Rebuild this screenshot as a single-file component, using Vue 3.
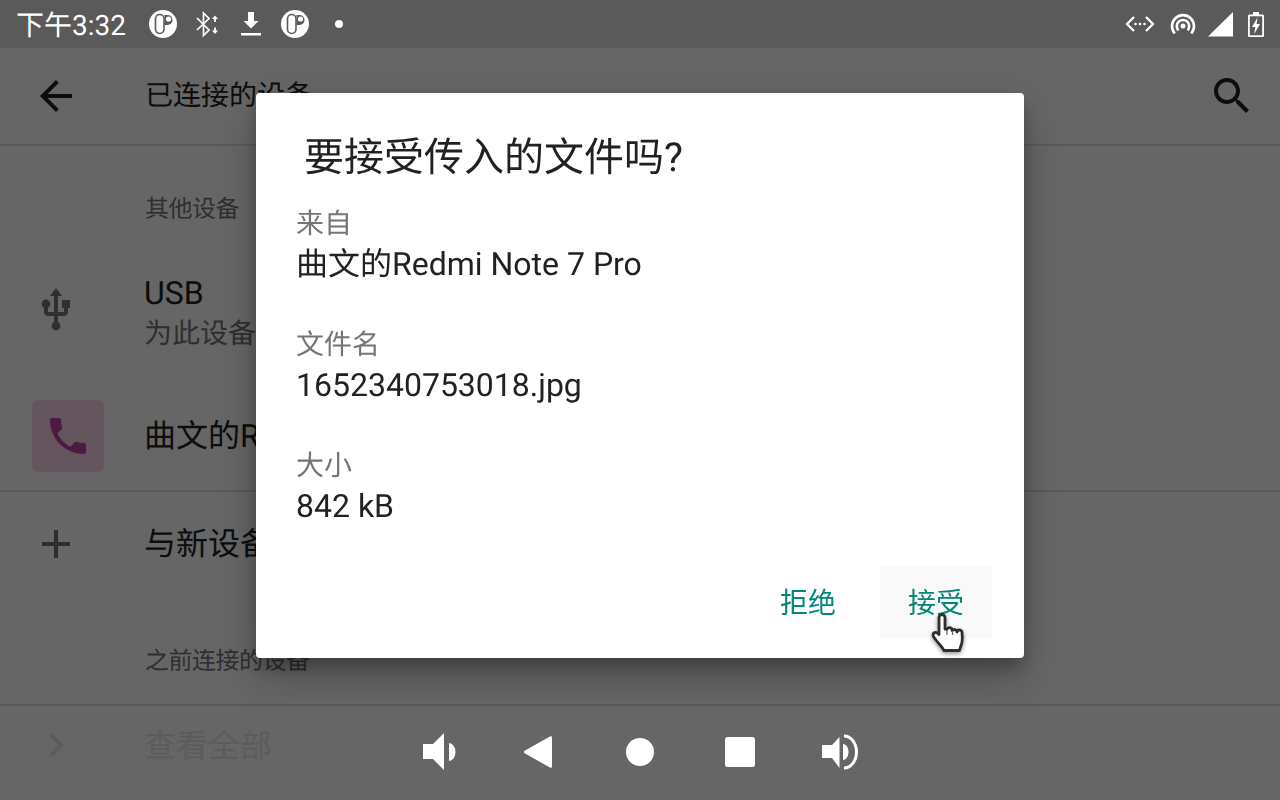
<script setup>
const dialogFields = [
  { label: '来自', value: '曲文的Redmi Note 7 Pro' },
  { label: '文件名', value: '1652340753018.jpg' },
  { label: '大小', value: '842 kB' }
]
</script>

<template>
  <div class="screen">
    <header class="status">
      <div class="status-left">
        <span class="clock">下午3:32</span>
        <svg class="app-dot" width="28" height="28" viewBox="0 0 28 28">
          <circle cx="14" cy="14" r="14" fill="#fff" />
          <rect x="6.500" y="4.500" width="8.500" height="19" rx="4.250" fill="#fff" stroke="#5a5a5a" stroke-width="1.600" />
          <path d="M15.500 5h3a5 5 0 0 1 0 10h-3z" fill="#5a5a5a" />
          <circle cx="19.500" cy="9" r="2.600" fill="#fff" />
        </svg>
        <svg class="bt" width="26" height="28" viewBox="0 0 26 28">
          <path d="M3 8l12 12-5.500 5.500V3L15 8.500 3 20" fill="none" stroke="#fff" stroke-width="1.700" />
          <path d="M21 5.500l-3 3.500h2.100v3h1.800V9H24zM21 24l-3-3.500h2.100v-3h1.800v3H24z" fill="#fff" />
        </svg>
        <svg class="dl" width="22" height="28" viewBox="0 0 22 28">
          <path d="M8 2h6v9h4.500L11 18.500 3.500 11H8z" fill="#fff" />
          <rect x="1" y="23" width="20" height="2.500" fill="#fff" />
        </svg>
        <svg class="app-dot2" width="28" height="28" viewBox="0 0 28 28">
          <circle cx="14" cy="14" r="14" fill="#fff" />
          <rect x="6.500" y="4.500" width="8.500" height="19" rx="4.250" fill="#fff" stroke="#5a5a5a" stroke-width="1.600" />
          <path d="M15.500 5h3a5 5 0 0 1 0 10h-3z" fill="#5a5a5a" />
          <circle cx="19.500" cy="9" r="2.600" fill="#fff" />
        </svg>
        <span class="more-dot"></span>
      </div>
      <div class="status-right">
        <svg width="30" height="18" viewBox="0 0 30 18">
          <path d="M9 2L2 9l7 7M21 2l7 7-7 7" fill="none" stroke="#fff" stroke-width="2.200" />
          <circle cx="10.500" cy="9" r="1.300" fill="#fff" />
          <circle cx="15" cy="9" r="1.300" fill="#fff" />
          <circle cx="19.500" cy="9" r="1.300" fill="#fff" />
        </svg>
        <svg class="wifi" width="26" height="24" viewBox="0 0 26 24">
          <path d="M4.800 21.500A11 11 0 1 1 21.200 21.500" fill="none" stroke="#fff" stroke-width="2.600" />
          <path d="M8.400 18.300A6.200 6.200 0 1 1 17.600 18.300" fill="none" stroke="#fff" stroke-width="2.600" />
          <circle cx="13" cy="14" r="2.500" fill="#fff" />
        </svg>
        <svg width="25" height="25" viewBox="0 0 25 25"><path d="M25 0v24.500H0z" fill="#fff" /></svg>
        <svg width="16" height="25" viewBox="0 0 16 25">
          <path d="M5 0h6v2.500h3.500a1.500 1.500 0 0 1 1.500 1.500v19.500a1.500 1.500 0 0 1-1.500 1.500h-13A1.500 1.500 0 0 1 0 23.500V4a1.500 1.500 0 0 1 1.500-1.500H5z" fill="#fff" />
          <path d="M1.800 4.300h12.400v19H1.800z" fill="#5a5a5a" />
          <path d="M9.500 5.500L4 15h3.200l-1 7L12 12H8.600z" fill="#fff" />
        </svg>
      </div>
    </header>

    <div class="toolbar">
      <svg class="icon back" width="48" height="48" viewBox="0 0 24 24"><path d="M20 11H7.830l5.590-5.590L12 4l-8 8 8 8 1.410-1.410L7.830 13H20v-2z" /></svg>
      <span class="toolbar-title">已连接的设备</span>
      <svg class="icon search" width="48" height="48" viewBox="0 0 24 24"><path d="M15.500 14h-.79l-.28-.27C15.410 12.590 16 11.110 16 9.500 16 5.910 13.090 3 9.500 3S3 5.910 3 9.500 5.910 16 9.500 16c1.610 0 3.090-.59 4.230-1.570l.27.28v.79l5 4.990L20.490 19l-4.990-5zm-6 0C7.010 14 5 11.990 5 9.500S7.010 5 9.500 5 14 7.010 14 9.500 11.990 14 9.500 14z" /></svg>
    </div>

    <div class="section-head first">其他设备</div>

    <div class="row usb">
      <svg class="row-icon usb-icon" width="48" height="48" viewBox="0 0 24 24"><path d="M15 7v4h1v2h-3V5h2l-3-4-3 4h2v8H8v-2.070c.7-.37 1.200-1.080 1.200-1.930 0-1.210-.99-2.200-2.200-2.200-1.210 0-2.200.99-2.200 2.200 0 .85.5 1.560 1.200 1.930V13c0 1.110.89 2 2 2h3v3.050c-.71.37-1.200 1.100-1.200 1.950 0 1.220.99 2.200 2.200 2.200 1.210 0 2.200-.98 2.200-2.200 0-.85-.49-1.580-1.200-1.950V15h3c1.110 0 2-.89 2-2v-2h1V7h-4z" /></svg>
      <div class="row-text">
        <div class="row-title">USB</div>
        <div class="row-sub">为此设备充电</div>
      </div>
    </div>

    <div class="row phone">
      <div class="tile">
        <svg width="48" height="48" viewBox="0 0 24 24"><path d="M6.620 10.790c1.440 2.830 3.760 5.140 6.590 6.590l2.200-2.200c.27-.27.670-.36 1.020-.24 1.120.37 2.330.57 3.570.57.55 0 1 .45 1 1V20c0 .55-.45 1-1 1-9.390 0-17-7.610-17-17 0-.55.45-1 1-1h3.500c.55 0 1 .45 1 1 0 1.250.2 2.450.57 3.570.11.35.03.74-.25 1.020l-2.200 2.200z" /></svg>
      </div>
      <div class="row-text"><div class="row-title">曲文的Redmi Note 7 Pro</div></div>
    </div>

    <div class="row add">
      <svg class="row-icon" width="48" height="48" viewBox="0 0 24 24"><path d="M19 13h-6v6h-2v-6H5v-2h6V5h2v6h6v2z" /></svg>
      <div class="row-text"><div class="row-title">与新设备配对</div></div>
    </div>

    <div class="section-head second">之前连接的设备</div>

    <div class="row all">
      <svg class="row-icon faint" width="48" height="48" viewBox="0 0 24 24"><path d="M8.590 16.590L10 18l6-6-6-6-1.410 1.410L13.170 12z" /></svg>
      <div class="row-text"><div class="row-title faint-text">查看全部</div></div>
    </div>

    <div class="scrim"></div>

    <section class="dialog">
      <h2 class="dialog-title">要接受传入的文件吗?</h2>
      <dl class="fields">
        <div v-for="field in dialogFields" :key="field.label" class="field">
          <dt>{{ field.label }}</dt>
          <dd>{{ field.value }}</dd>
        </div>
      </dl>
      <div class="actions">
        <button class="action">拒绝</button>
        <button class="action hovered">接受</button>
      </div>
    </section>

    <svg class="cursor" width="40" height="44" viewBox="0 0 40 44">
      <path d="M10 4.500a3 3 0 0 1 6 0V16l2 .3a2.600 2.600 0 0 1 5 .7l.3.6a2.600 2.600 0 0 1 4.700 1.400a2.500 2.500 0 0 1 5 1.400c.5 4 .5 8-.8 11.600-.6 2-1.200 3.400-1.700 5.500H15c-1.500-3-4-5.500-8-10.500-1.200-1.600-3-3-3-5 0-2.500 3-3.500 5-1.500l1 1z" fill="#fff" stroke="#2e2e2e" stroke-width="2.800" stroke-linejoin="round" />
      <path d="M18 17v5M23.500 18v4" stroke="#666" stroke-width="1.200" fill="none" />
    </svg>

    <nav class="nav">
      <svg width="36" height="36" viewBox="0 0 36 36">
        <path d="M1 10h10L22 -1v37L11 25H1z" fill="#fff" />
        <path d="M27 9a6.500 9 0 0 1 0 18z" fill="#fff" />
      </svg>
      <svg width="36" height="36" viewBox="0 0 36 36"><path d="M30 3.500v29a1.300 1.300 0 0 1-2 1.100L2.600 19.200a1.400 1.400 0 0 1 0-2.400L28 2.400a1.300 1.300 0 0 1 2 1.100z" fill="#fff" /></svg>
      <svg width="36" height="36" viewBox="0 0 36 36"><circle cx="18" cy="18" r="14" fill="#fff" /></svg>
      <svg width="36" height="36" viewBox="0 0 36 36"><rect x="3" y="3" width="30" height="30" rx="2.500" fill="#fff" /></svg>
      <svg width="36" height="36" viewBox="0 0 36 36">
        <path d="M0 11h10L17.500 3v31L10 24H0z" fill="#fff" />
        <path d="M21 10a5.500 8 0 0 1 0 16z" fill="#fff" />
        <path d="M22 2a12.500 16 0 0 1 0 32" fill="none" stroke="#fff" stroke-width="3" />
      </svg>
    </nav>
  </div>
</template>

<style>
html, body { margin: 0; background: #666; }
</style>

<style scoped>
.screen {
  position: relative;
  width: 1280px;
  height: 800px;
  overflow: hidden;
  background: #fff;
  color: #212121;
  font-family: Roboto, "Noto Sans CJK SC", sans-serif;
  text-rendering: geometricPrecision;
  display: flex;
  flex-direction: column;
}
.status {
  position: relative;
  z-index: 1;
  height: 48px;
  flex: none;
  background: #5a5a5a;
  color: #fff;
  display: flex;
  justify-content: space-between;
  align-items: center;
  padding: 0 16px;
  box-sizing: border-box;
}
.status-left, .status-right { display: flex; align-items: center; }
.clock { font-size: 28px; width: 133px; }
.bt { margin-left: 17px; }
.dl { margin-left: 20px; }
.app-dot2 { margin-left: 19px; }
.more-dot { width: 8px; height: 8px; border-radius: 50%; background: #fff; margin-left: 26px; }
.status-right { gap: 15px; }
.wifi { margin-right: -3px; }
.toolbar {
  flex: none;
  display: flex;
  align-items: center;
  padding: 0 24px 0 32px;
  box-sizing: border-box;
  border-bottom: 2px solid #e0e0e0;
  height: 98px;
}
.toolbar-title { font-size: 28px; margin-left: 65px; flex: 1; line-height: 38px; }
.icon { fill: #212121; flex: none; }
.section-head {
  font-size: 24px;
  letter-spacing: -0.5px;
  color: #757575;
  padding-left: 145px;
  line-height: 32px;
  flex: none;
}
.section-head.first { margin-top: 47px; }
.section-head.second {
  height: 110px;
  box-sizing: border-box;
  padding-top: 49px;
  border-bottom: 2px solid #e0e0e0;
}
.row { display: flex; align-items: center; padding-left: 32px; box-sizing: border-box; flex: none; }
.row-icon { fill: #757575; flex: none; }
.row-text { margin-left: 64px; }
.row-title { font-size: 32px; line-height: 40px; white-space: nowrap; }
.row-sub { font-size: 28px; line-height: 40px; margin-top: 1px; color: #757575; white-space: nowrap; }
.usb { height: 114px; margin-top: 31px; padding-top: 1px; }
.usb-icon { margin-bottom: 7px; }
.phone { height: 122px; border-bottom: 2px solid #e0e0e0; align-items: flex-start; padding-top: 30px; }
.phone .row-text { margin-left: 40px; margin-top: 16px; }
.tile {
  width: 72px;
  height: 72px;
  border-radius: 6px;
  background: #f8d2ec;
  display: flex;
  align-items: center;
  justify-content: center;
  fill: #c03fa0;
}
.add { height: 104px; }
.all { height: 96px; align-items: flex-start; padding-top: 15px; }
.all .row-text { margin-top: 5px; }
.faint { fill: #e6e6e6; }
.faint-text { color: #e6e6e6; }
.scrim {
  position: absolute;
  inset: 0;
  background: rgba(0, 0, 0, 0.6);
}
.dialog {
  position: absolute;
  left: 256px;
  top: 93px;
  width: 768px;
  height: 565px;
  box-sizing: border-box;
  background: #fff;
  border-radius: 4px;
  box-shadow: 0 24px 38px rgba(0,0,0,.14), 0 9px 46px rgba(0,0,0,.12), 0 11px 15px rgba(0,0,0,.2);
  padding: 37px 32px 20px 40px;
  display: flex;
  flex-direction: column;
  will-change: transform;
}
.dialog-title {
  margin: 0 0 0 8px;
  font-size: 40px;
  font-weight: 400;
  line-height: 56px;
  color: #212121;
}
.fields { margin: 18px 0 0; flex: 1; display: flex; flex-direction: column; gap: 41px; }
.field dt { font-size: 28px; line-height: 40px; color: #757575; }
.field dd { margin: 0; font-size: 32px; line-height: 40px; color: #212121; }
.actions { display: flex; justify-content: flex-end; gap: 16px; }
.action {
  width: 112px;
  height: 72px;
  border: 0;
  border-radius: 4px;
  background: transparent;
  color: #00877a;
  font: inherit;
  font-size: 28px;
  padding: 0 0 2px;
}
.action.hovered { background: #f9f9f9; }
.cursor {
  position: absolute;
  left: 929px;
  top: 613px;
  filter: drop-shadow(0 2px 2px rgba(0,0,0,.4));
}
.nav {
  position: absolute;
  left: 422px;
  bottom: 30px;
  display: flex;
  gap: 64px;
  align-items: center;
}
.nav svg { overflow: visible; }
</style>
